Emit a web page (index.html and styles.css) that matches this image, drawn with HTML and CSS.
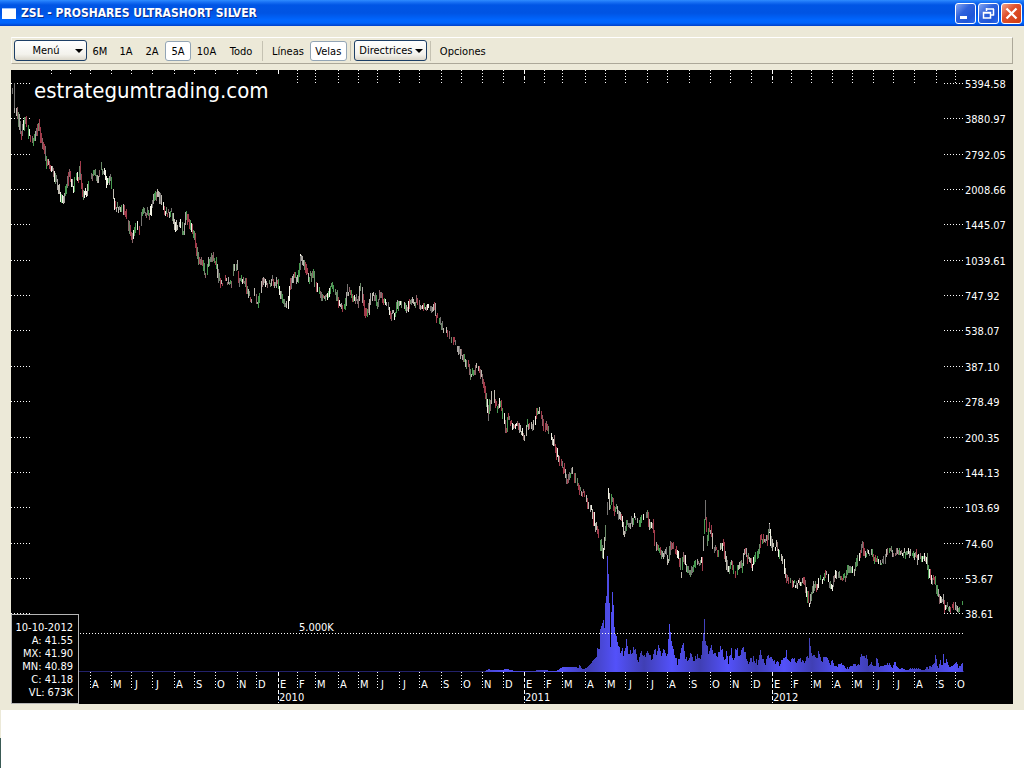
FILE: index.html
```html
<!DOCTYPE html>
<html lang="es">
<head>
<meta charset="utf-8">
<title>ZSL - PROSHARES ULTRASHORT SILVER</title>
<link rel="stylesheet" href="styles.css">
</head>
<body>
<div class="window">
  <header class="titlebar">
    <span class="app-icon"></span>
    <h1 class="title">ZSL - PROSHARES ULTRASHORT SILVER</h1>
    <div class="controls">
      <button class="ctl" type="button" aria-label="Minimizar"><svg viewBox="0 0 19 19"><path d="M4 13.500h7" stroke="#fff" stroke-width="3"/></svg></button>
      <button class="ctl" type="button" aria-label="Restaurar"><svg viewBox="0 0 19 19"><path d="M7 5h8M14.500 5v6.500M12 11h3M7.500 4v3" fill="none" stroke="#fff" stroke-width="1.500"/><path d="M4.500 8.500h7v5.500h-7zM4 9h8" fill="none" stroke="#fff" stroke-width="1.500"/></svg></button>
      <button class="ctl ctl-close" type="button" aria-label="Cerrar"><svg viewBox="0 0 19 19"><path d="M4.500 4.500l10 10M14.500 4.500l-10 10" stroke="#fff" stroke-width="2.300"/></svg></button>
    </div>
  </header>
  <main class="content">
    <nav class="toolbar" aria-label="Herramientas">
      <button class="tool menu" type="button" aria-haspopup="true"><span class="menu-label">Menú</span><span class="arrow"></span></button>
      <button class="tool" type="button">6M</button>
      <button class="tool" type="button">1A</button>
      <button class="tool" type="button">2A</button>
      <button class="tool active" type="button" aria-pressed="true">5A</button>
      <button class="tool wide" type="button">10A</button>
      <button class="tool wider" type="button">Todo</button>
      <span class="sep"></span>
      <button class="tool text" type="button">Líneas</button>
      <button class="tool active velas" type="button" aria-pressed="true">Velas</button>
      <span class="sep tight"></span>
      <button class="tool menu" type="button" aria-haspopup="true"><span class="menu-label">Directrices</span><span class="arrow"></span></button>
      <span class="sep tight"></span>
      <button class="tool text" type="button">Opciones</button>
    </nav>
    <svg class="chart" id="chart" viewBox="11 70 1002 634" role="img" aria-label="Cotización de ZSL">
      <defs>
        <linearGradient id="vol" gradientUnits="userSpaceOnUse" x1="588" y1="0" x2="616" y2="0" spreadMethod="reflect">
          <stop offset="0" stop-color="#403fb4"/><stop offset="1" stop-color="#5351fa"/>
        </linearGradient>
      </defs>
    </svg>
  </main>
</div>
<div class="desktop"></div>
<script src="chart.js"></script>
</body>
</html>
```
FILE: styles.css
```css
* { box-sizing: border-box; }
body {
  margin: 0;
  min-height: 100vh;
  display: flex;
  flex-direction: column;
  background: #fff;
  color: #000;
  font: 11px "DejaVu Sans Condensed", "DejaVu Sans", sans-serif;
}
.window { background: #ece9d8; }
.titlebar {
  display: flex;
  align-items: center;
  height: 26px;
  padding: 0 2px;
  background: linear-gradient(#2f8cff 0, #1a72f5 2px, #0055e5 5px, #0054e3 13px, #0066ff 20px, #0064fb 23px, #0040c8 26px);
}
.app-icon {
  width: 14px;
  height: 11px;
  margin-right: 5px;
  background: #fff;
  border-top: 1px solid #9cc2ff;
}
.title {
  flex: 1;
  margin: 0;
  color: #fff;
  font-size: 12px;
  font-weight: bold;
  text-shadow: 1px 1px #0a2d8a;
}
.controls { display: flex; gap: 2px; }
.ctl {
  width: 21px;
  height: 21px;
  padding: 0;
  border: 1px solid #fff;
  border-radius: 3px;
  background: linear-gradient(135deg, #86a6f2, #2f62dc 40%, #1f56d8 75%, #2a6cf0);
}
.ctl-close { background: linear-gradient(135deg, #f0a58c, #e0512d 40%, #cf3c12); }
.ctl svg { display: block; width: 19px; height: 19px; }
.content { padding: 11px 11px 6px; }
.toolbar {
  display: flex;
  align-items: center;
  height: 27px;
  padding: 0 2px;
  margin-bottom: 6px;
  border: 1px solid;
  border-color: #fff #aca899 #aca899 #f8f7f0;
}
.tool {
  width: 26px;
  height: 20px;
  padding: 1px 0 0;
  border: 1px solid transparent;
  border-radius: 3px;
  background: none;
  color: #000;
  font: inherit;
  white-space: nowrap;
}
.menu {
  display: flex;
  align-items: center;
  width: 73px;
  height: 21px;
  padding: 0 3px 0 2px;
  border-color: #1d3f66;
  background: linear-gradient(#fff, #f3f2ec 70%, #dcd8cb);
}
.menu-label { flex: 1; text-align: center; }
.arrow { border: solid transparent; border-width: 4px 4px 0; border-top-color: #000; }
.wide { width: 31px; }
.wider { width: 38px; }
.text { width: auto; padding: 1px 5px 0; }
.active { background: #fff; border-color: #93a5b5; padding-top: 2px; }
.velas { width: 37px; }
.sep { width: 1px; height: 20px; margin: 0 3px 0 2px; background: #c5c2b2; }
.tight { margin: 0 3px; }
.chart { display: block; width: 100%; background: #000; }
.chart text { fill: #fff; font-size: 11px; }
.chart .brand { font-size: 22px; }
.chart .end { text-anchor: end; }
.dots { stroke: #fff; stroke-dasharray: 1 2; shape-rendering: crispEdges; }
.year { stroke: #fff; stroke-dasharray: 4 2; shape-rendering: crispEdges; }
.base { stroke: #22216a; shape-rendering: crispEdges; }
.bars { fill: url(#vol); shape-rendering: crispEdges; }
.info { fill: #000; stroke: #b5b5b5; shape-rendering: crispEdges; }
.candle { fill: none; shape-rendering: crispEdges; }
.desktop {
  flex: 1;
  background: linear-gradient(#ece9d8 28px, #3a5a55 28px) left / 1px 100% no-repeat #fff;
}
```
FILE: chart.js
```js
const chart = document.getElementById("chart");

function add(tag, attrs, text) {
  const node = document.createElementNS("http://www.w3.org/2000/svg", tag);
  for (const key in attrs) node.setAttribute(key, attrs[key]);
  if (text) node.textContent = text;
  chart.appendChild(node);
}

function line(cls, x1, y1, x2, y2) {
  add("path", { class: cls, d: `M${x1} ${y1}L${x2} ${y2}` });
}

let seed = 7;
function rand() {
  seed = (seed * 16807) % 2147483647;
  return seed / 2147483647;
}

function parse(str) {
  return str.trim().split(/\s+/).map(p => p.split(",").map(Number));
}

function at(points, x) {
  for (let i = 1; i < points.length; i++) {
    const [a, ya] = points[i - 1];
    const [b, yb] = points[i];
    if (x <= b) return ya + (yb - ya) * (x - a) / (b - a || 1);
  }
  return points[points.length - 1][1];
}

const price = parse(`
13,90 14,104 15,108 17,113 18,118 20,130 21,137 23,128 25,118 27,124 28,132 30,138 32,142 34,137 36,132 38,125 39,126 41,140 43,146
45,152 46,160 48,163 50,168 53,172 56,181 58,188 60,196 63,201 66,190 69,173 71,181 73,188 75,176 78,181 80,169 81,182 83,196
86,192 88,186 91,178 94,172 98,178 101,169 104,172 107,184 110,178 112,192 115,206 119,208 122,206 126,216 129,228 131,238
133,234 136,226 139,230 142,214 146,213 149,216 152,204 155,197 158,193 160,200 164,210 168,214 171,210 174,222 177,230
181,224 183,232 186,216 190,226 194,236 196,250 199,262 203,265 205,274 209,262 212,258 216,262 218,276 221,283 226,280
231,283 234,266 237,268 239,281 245,281 247,293 251,298 254,293 257,305 260,293 263,280 266,284 269,284 272,280 275,286
277,281 281,297 284,302 288,303 290,287 294,275 297,280 300,262 301,257 304,263 306,270 309,278 313,272 315,287 319,293
322,296 327,294 331,287 335,292 339,304 345,307 347,291 351,294 356,300 358,302 360,286 363,303 365,316 368,310 371,294
375,298 377,304 380,294 384,303 387,305 391,315 395,313 399,301 403,304 407,309 410,300 414,304 417,300 420,310 425,308
429,309 434,306 436,316 440,322 444,329 450,337 457,346 461,354 464,358 468,366 471,375 476,367 479,370 483,381 485,390
487,404 488,414 490,403 493,391 495,403 498,408 500,403 503,417 506,430 508,419 512,424 517,426 520,431 524,437 527,425
531,427 533,423 537,413 541,413 543,422 547,430 550,438 554,443 557,455 560,462 564,471 567,481 570,473 573,473 576,483
580,491 584,493 587,502 592,512 595,525 599,540 603,554 605,533 607,510 608,493 610,507 612,497 614,511 616,508 618,513
622,522 624,531 627,522 630,524 634,518 639,526 642,515 647,514 649,526 653,524 654,540 658,549 662,556 666,554 668,562
671,545 675,550 679,560 681,573 683,559 687,567 690,573 694,566 697,562 702,562 703,542 704,525 705,508 707,540 709,528
711,530 713,548 718,551 723,543 725,557 728,570 731,563 735,573 738,568 742,565 744,552 748,558 752,565 755,558 759,550
761,538 764,542 767,538 769,528 772,548 776,546 779,555 783,562 785,575 788,581 795,584 803,580 806,592 809,602 812,592
814,585 817,587 820,577 823,580 826,573 829,582 832,585 836,574 840,577 845,576 848,570 853,572 857,563 860,553 862,546
864,555 867,551 872,553 876,563 878,561 883,562 886,553 890,547 893,553 898,551 903,553 908,553 912,556 915,554 918,559
923,558 927,561 928,572 932,581 934,580 937,590 940,600 943,598 944,607 950,607 952,604 956,610 958,609 962,605`);

const volume = parse(`
485,671 488,669 491,670 500,670 507,669 515,671 530,671 540,670 556,671 560,668 562,667 575,667 578,668 579,665 582,669
586,668 590,664 592,661 596,657 597,648 599,649 600,629 603,620 604,628 605,603 606,596 607,556 608,574 609,603 610,647
611,612 612,592 614,625 615,636 617,641 618,646 620,652 622,648 623,655 625,647 626,641 628,653 632,654 633,645 635,652
638,661 641,649 643,657 647,654 652,659 654,648 656,657 658,646 660,653 662,656 663,650 667,655 668,642 669,625 671,642
672,647 674,655 677,663 679,657 681,648 683,644 685,657 688,662 690,654 693,660 697,657 700,662 702,643 704,622 705,642
708,652 711,643 713,653 717,660 720,648 722,650 724,662 726,653 728,662 731,652 733,660 736,648 739,656 743,649 745,655
748,663 753,659 757,663 760,648 762,660 765,663 768,656 772,659 775,663 779,664 783,656 784,660 786,653 787,660 793,660
796,663 799,658 802,663 805,663 806,656 808,660 809,638 811,656 812,655 814,653 816,658 819,653 821,660 826,660 828,663
832,663 835,667 840,663 843,667 848,668 853,666 858,665 860,660 861,655 863,660 866,658 868,665 871,663 875,666 876,658
879,667 886,664 887,662 892,667 895,663 898,668 907,670 912,668 917,669 923,670 927,668 932,667 935,658 938,668 940,663
942,667 943,653 944,663 946,662 950,667 955,663 958,668 962,665`);

line("base", 79, 671.5, 964, 671.5);
let bars = "";
for (let x = 485; x < 963; x++) {
  let y = at(volume, x);
  if (x > 612) y += (rand() - 0.6) * Math.min(6, (672 - y) * 0.6);
  y = Math.round(Math.min(y, 671));
  bars += `M${x} 672V${y}h1V672z`;
}
add("path", { class: "bars", d: bars });
line("dots", 80, 633.5, 964, 633.5);

const prices = ["5394.58", "3880.97", "2792.05", "2008.66", "1445.07", "1039.61", "747.92", "538.07",
  "387.10", "278.49", "200.35", "144.13", "103.69", "74.60", "53.67", "38.61"];
prices.forEach((label, i) => {
  const y = Math.round(83 + i * 35.35) + 0.5;
  line("dots", 11, y, 31, y);
  line("dots", 944, y, 964, y);
  add("text", { x: 965, y: y + 4.5 }, label);
});

const colors = ["#f4f4e6", "#aaa6a2", "#757371", "#a23c4c", "#479a50", "#c0bcb2", "#8a6468", "#6a8a68"];
const paths = colors.map(() => "");
for (let x = 14; x < 963; x++) {
  if (rand() < 0.1) continue;
  const y = at(price, x);
  const slope = at(price, x + 1) - at(price, x - 1);
  const spread = 1 + rand() * 2.5 + Math.min(Math.abs(slope) * 0.4, 5);
  const mid = y + (rand() - 0.5) * 6;
  let tone = Math.floor(rand() * colors.length);
  if (Math.abs(slope) > 2 && rand() < 0.2) tone = slope > 0 ? 3 : 4;
  paths[tone] += `M${x + 0.5} ${Math.round(mid - spread)}V${Math.round(mid + spread)}`;
}
paths[2] += "M14.500 83V108M12.500 88V94M488.500 405V421M80.500 164V180M705.500 500V520";
paths[0] += "M300.500 254V262M769.500 523V533";
paths.forEach((d, i) => add("path", { class: "candle", stroke: colors[i], d }));

const months = [51, 70, 90, 111, 131, 152, 174, 194, 215, 237, 256, 278, 297, 315, 338, 358, 377, 399, 419, 441,
  461, 482, 503, 524, 544, 562, 585, 605, 625, 647, 667, 689, 710, 730, 751, 772, 791, 811, 832, 852, 873, 893,
  914, 936, 955];
const letters = "FMAMJJASONDEFMAMJJASONDEFMAMJJASONDEFMAMJJASO";
const years = { 278: "2010", 524: "2011", 772: "2012" };
months.forEach((x, i) => {
  const cls = years[x] ? "year" : "dots";
  line(cls, x + 0.5, 70, x + 0.5, x < 290 ? 74 : 83);
  if (x < 80) return;
  line(cls, x + 0.5, 672, x + 0.5, years[x] ? 703 : 688);
  add("text", { x: x + (letters[i] === "J" ? 4 : 2), y: 688 }, letters[i]);
  if (years[x]) add("text", { x: x + 1, y: 701 }, years[x]);
});

add("text", { x: 299, y: 631 }, "5.000K");
add("text", { class: "brand", x: 34, y: 98 }, "estrategumtrading.com");
add("rect", { class: "info", x: 11.5, y: 614.5, width: 67, height: 89 });
["10-10-2012", "A: 41.55", "MX: 41.90", "MN: 40.89", "C: 41.18", "VL: 673K"].forEach((label, i) => {
  add("text", { class: "end", x: 73, y: 631 + i * 13 }, label);
});
```
